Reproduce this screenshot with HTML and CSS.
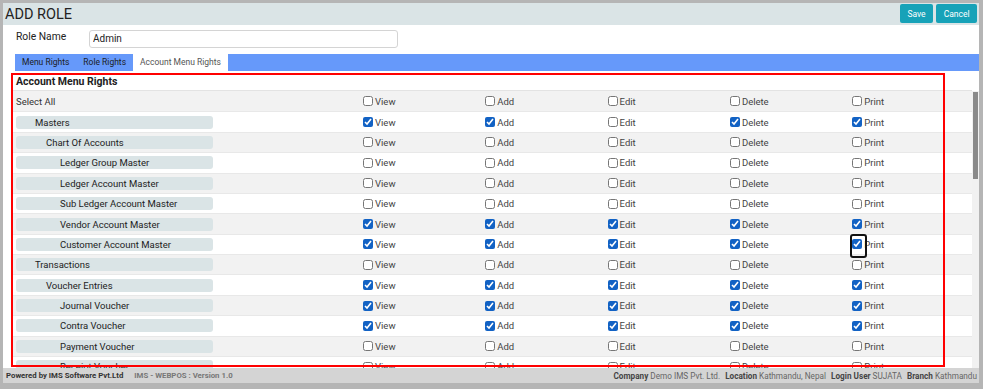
FILE: index.html
```html
<!DOCTYPE html>
<html>
  <head>
    <meta charset="UTF-8" />
    <title>Add Role</title>
    <link rel="stylesheet" href="styles.css">
  </head>
  <body>
    <div class="app">
      <div class="page-header">
        <h1>ADD ROLE</h1>
        <div class="actions">
          <button class="btn">Save</button>
          <button class="btn">Cancel</button>
        </div>
      </div>

      <div class="role-name">
        <label for="roleName">Role Name</label>
        <input id="roleName" type="text" value="Admin">
      </div>

      <div class="tabs">
        <span class="tab">Menu Rights</span>
        <span class="tab">Role Rights</span>
        <span class="tab active">Account Menu Rights</span>
      </div>

      <div class="rights-title">Account Menu Rights</div>
      <div class="rights-scroll">
        <div class="rights-list" id="rightsList"></div>
        <div class="scrollbar"><div class="scrollbar-thumb"></div></div>
      </div>

      <div class="footer">
        <div class="footer-left">
          <span class="powered">Powered by IMS Software Pvt.Ltd</span>
          <span class="version">IMS - WEBPOS : Version 1.0</span>
        </div>
        <div class="footer-right">
          <b>Company</b> Demo IMS Pvt. Ltd.
          <b>Location</b> Kathmandu, Nepal
          <b>Login User</b> SUJATA
          <b>Branch</b> Kathmandu
        </div>
      </div>
    </div>

    <div class="highlight"></div>

    <script>
      const columns = ['View', 'Add', 'Edit', 'Delete', 'Print'];

      // name, tree level, rights flags in column order
      const menus = [
        ['Masters', 1, '11011'],
        ['Chart Of Accounts', 2, '00000'],
        ['Ledger Group Master', 3, '00000'],
        ['Ledger Account Master', 3, '00000'],
        ['Sub Ledger Account Master', 3, '00000'],
        ['Vendor Account Master', 3, '11111'],
        ['Customer Account Master', 3, '11111', 4],
        ['Transactions', 1, '00000'],
        ['Voucher Entries', 2, '11111'],
        ['Journal Voucher', 3, '11111'],
        ['Contra Voucher', 3, '11111'],
        ['Payment Voucher', 3, '00000'],
        ['Receipt Voucher', 3, '00000'],
        ['Debit Note', 3, '00000'],
        ['Credit Note', 3, '00000']
      ];

      function checkCell(label, checked, focused) {
        let box = `<input type="checkbox"${checked ? ' checked' : ''}>`;
        if (focused) box = `<span class="focus">${box}</span>`;
        return `<label class="check">${box}${label}</label>`;
      }

      const list = document.getElementById('rightsList');
      let html = '<div class="rights-row select-all"><div class="select-label">Select All</div>';
      html += columns.map(c => checkCell(c, false)).join('');
      html += '</div>';

      menus.forEach(([name, level, flags, focusCol]) => {
        html += `<div class="rights-row"><div><div class="menu-item level-${level}">${name}</div></div>`;
        html += columns.map((c, i) => checkCell(c, flags[i] === '1', focusCol === i)).join('');
        html += '</div>';
      });

      list.innerHTML = html;
    </script>
  </body>
</html>
```

FILE: styles.css
```css
* {
  box-sizing: border-box;
}
body {
  margin: 0;
  background: #b5b5b5;
  font-family: Roboto, 'Liberation Sans', sans-serif;
  color: #333;
}
.app {
  margin: 3px 4px 0 3px;
  height: 380px;
  background: #fff;
  display: flex;
  flex-direction: column;
}
.page-header {
  height: 22px;
  flex: none;
  background: #dae4e6;
  display: flex;
  justify-content: space-between;
  align-items: flex-start;
  padding: 1px 2px 0 2px;
}
h1 {
  margin: 0;
  font-size: 14.5px;
  font-weight: 400;
  line-height: 21px;
  color: #222;
}
.actions {
  display: flex;
  gap: 3px;
}
.btn {
  height: 19px;
  padding: 0 7.5px;
  background: #17a2b8;
  color: #fff;
  border: none;
  border-radius: 2px;
  font-family: Roboto, sans-serif;
  font-size: 8.5px;
}
.role-name {
  height: 29.3px;
  flex: none;
  display: flex;
  align-items: flex-start;
  padding: 5px 0 0 13px;
}
.role-name label {
  width: 73px;
  font-size: 10.3px;
  line-height: 14px;
  color: #222;
}
.role-name input {
  width: 309px;
  height: 17.5px;
  border: 1px solid #d4d4d4;
  border-radius: 3px;
  padding: 0 3px;
  font-family: Roboto, sans-serif;
  font-size: 10px;
  color: #222;
}
.tabs {
  margin-left: 12px;
  height: 16.4px;
  flex: none;
  background: #6699fa;
  display: flex;
}
.tab {
  padding: 0 7px;
  font-size: 8.5px;
  line-height: 16.4px;
  color: #1c1c1c;
}
.tab.active {
  background: #fff;
  color: #555;
}
.rights-title {
  margin: 1.3px 7px 0 10px;
  height: 18.7px;
  flex: none;
  padding-left: 3px;
  line-height: 19px;
  font-size: 10.5px;
  font-weight: 700;
  color: #222;
  border-bottom: 1px solid #e3e3e3;
}
.rights-scroll {
  flex: 1;
  min-height: 0;
  margin-left: 10px;
  display: flex;
}
.rights-list {
  flex: 1;
  overflow: hidden;
}
.scrollbar {
  width: 7px;
  padding: 1px 1.3px 0 0.7px;
  background: #f1f1f1;
}
.scrollbar-thumb {
  height: 87px;
  background: #8a8a8a;
}
.rights-row {
  display: grid;
  grid-template-columns: 350px repeat(4, 122.3px) 1fr;
  align-items: center;
  height: 20.4px;
  border-bottom: 1px solid #e8e8e8;
}
.rights-row:nth-child(odd) {
  background: #f2f2f2;
}
.rights-row.select-all {
  height: 21.7px;
}
.select-label {
  padding-left: 3px;
  font-size: 9.5px;
  color: #333;
}
.menu-item {
  margin-left: 3px;
  width: 197px;
  height: 13px;
  line-height: 13px;
  border-radius: 3px;
  background: #dae4e6;
  font-size: 9.5px;
  color: #222;
}
.level-1 {
  padding-left: 19px;
}
.level-2 {
  padding-left: 30px;
}
.level-3 {
  padding-left: 44px;
}
.check {
  display: flex;
  align-items: center;
  gap: 2px;
  font-size: 9.5px;
  color: #444;
}
.check input {
  width: 10px;
  height: 10px;
  margin: 0;
  accent-color: #1262c4;
}
.focus {
  position: relative;
  display: inline-flex;
}
.focus::after {
  content: '';
  position: absolute;
  left: -2.3px;
  top: -5.7px;
  width: 12.7px;
  height: 20.7px;
  border: 2px solid #111;
  border-radius: 3px;
}
.footer {
  height: 15px;
  flex: none;
  background: #d4d4d4;
  display: flex;
  justify-content: space-between;
  align-items: center;
  padding: 0 2px 0 3px;
  font-size: 7.8px;
}
.footer-left {
  display: flex;
  gap: 11px;
  font-weight: 700;
}
.powered {
  color: #333;
}
.version {
  color: #777;
}
.footer-right {
  font-size: 8.2px;
  color: #666;
}
.footer-right b {
  color: #444;
  margin-left: 3px;
}
.highlight {
  position: absolute;
  left: 11px;
  top: 72.5px;
  width: 934px;
  height: 294px;
  border: 2px solid #f00;
  pointer-events: none;
}
```
